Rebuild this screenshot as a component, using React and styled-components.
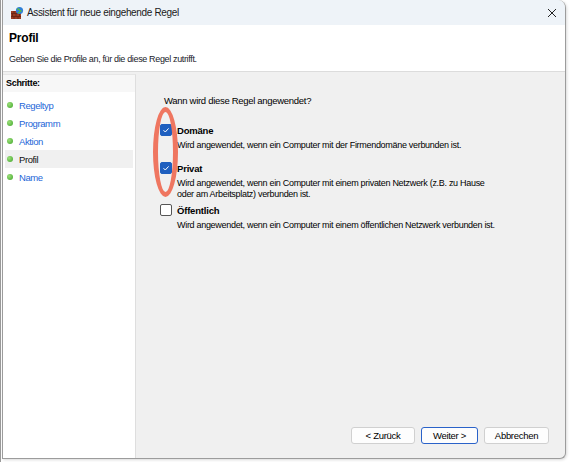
// IMPORTS
import React from 'react';
import styled, { createGlobalStyle } from 'styled-components';

// DATA
const steps = [
    { label: 'Regeltyp' },
    { label: 'Programm' },
    { label: 'Aktion' },
    { label: 'Profil', current: true },
    { label: 'Name' },
];

const profiles = [
    {
        name: 'Domäne',
        checked: true,
        after: 11,
        text: ['Wird angewendet, wenn ein Computer mit der Firmendomäne verbunden ist.'],
    },
    {
        name: 'Privat',
        checked: true,
        after: 4,
        text: [
            'Wird angewendet, wenn ein Computer mit einem privaten Netzwerk (z.B. zu Hause',
            'oder am Arbeitsplatz) verbunden ist.',
        ],
    },
    {
        name: 'Öffentlich',
        checked: false,
        after: 0,
        text: ['Wird angewendet, wenn ein Computer mit einem öffentlichen Netzwerk verbunden ist.'],
    },
];

const buttons = [
    { label: '< Zurück', width: 64 },
    { label: 'Weiter >', width: 57, primary: true },
    { label: 'Abbrechen', width: 65 },
];

// ICONS
const FirewallIcon = () => (
    <svg width="14" height="14" viewBox="0 0 14 14">
        <rect x="1" y="5" width="10" height="8" fill="#9a3a22" />
        <path d="M1 7.5h10M1 10.5h10M4 5v2.5M8 5v2.5M2.5 7.5v3M6 7.5v3M9.5 7.5v3M4 10.5V13M8 10.5V13" stroke="#5e2010" strokeWidth="0.7" />
        <circle cx="9.5" cy="4.5" r="3.6" fill="#2f7fd8" />
        <path d="M7.2 3.2c1-.6 1.8 0 2.2.8.4.8 1.5.6 1.8 1.6M8.3 7.2c.3-1 1-1.3 1.8-1" stroke="#5cbf3a" strokeWidth="1.3" fill="none" />
    </svg>
);

const CloseIcon = () => (
    <svg width="10" height="10" viewBox="0 0 10 10">
        <path d="M1 1l8 8M9 1L1 9" stroke="#222" strokeWidth="1" />
    </svg>
);

const CheckMark = () => (
    <svg width="8" height="8" viewBox="0 0 8 8">
        <path d="M1.5 4.2l1.8 1.8 3.3-3.6" stroke="#fff" strokeWidth="1" fill="none" />
    </svg>
);

// COMPONENT
const App = () => {
    return (
        <>
            <GlobalStyle />
            <Desktop>
                <Window>
                    <TitleBar>
                        <TitleLeft>
                            <FirewallIcon />
                            <span>Assistent für neue eingehende Regel</span>
                        </TitleLeft>
                        <CloseButton><CloseIcon /></CloseButton>
                    </TitleBar>

                    <Header>
                        <h1>Profil</h1>
                        <p>Geben Sie die Profile an, für die diese Regel zutrifft.</p>
                    </Header>

                    <Body>
                        <Sidebar>
                            <SidebarTitle>Schritte:</SidebarTitle>
                            {steps.map((s) => (
                                <Step key={s.label} $current={s.current}>
                                    <Dot />
                                    <span>{s.label}</span>
                                </Step>
                            ))}
                        </Sidebar>

                        <Content>
                            <Question>Wann wird diese Regel angewendet?</Question>
                            <Options>
                                <Marker />
                                {profiles.map((p) => (
                                    <Option key={p.name} $after={p.after}>
                                        <OptionHead>
                                            <Box $checked={p.checked}>{p.checked && <CheckMark />}</Box>
                                            <strong>{p.name}</strong>
                                        </OptionHead>
                                        <OptionText>
                                            {p.text.map((t) => <div key={t}>{t}</div>)}
                                        </OptionText>
                                    </Option>
                                ))}
                            </Options>

                            <Buttons>
                                {buttons.map((b) => (
                                    <Button key={b.label} $width={b.width} $primary={b.primary}>
                                        {b.label}
                                    </Button>
                                ))}
                            </Buttons>
                        </Content>
                    </Body>
                </Window>
            </Desktop>
        </>
    );
};

// STYLED COMPONENTS
const GlobalStyle = createGlobalStyle`
    html, body {
        margin: 0;
        padding: 0;
        background: #fff;
    }
    body {
        font-family: "Liberation Sans", Arial, sans-serif;
        font-size: 9px;
        color: #000;
    }
`

const Desktop = styled.div`
    width: 573px;
    height: 462px;
    overflow: hidden;
    padding-left: 2px;
    box-sizing: border-box;
    background: linear-gradient(to right, #9a9a9a 0, #9a9a9a 1px, #fff 1px);
`

const Window = styled.div`
    width: 564px;
    height: 459px;
    box-sizing: border-box;
    border: 1px solid #9c9c9c;
    border-top: none;
    border-radius: 0 8px 6px 0;
    overflow: hidden;
    display: flex;
    flex-direction: column;
    background: #f0f0f0;
    box-shadow: 1px 1px 3px rgba(0, 0, 0, 0.15);
`

const TitleBar = styled.div`
    height: 25px;
    flex-shrink: 0;
    display: flex;
    align-items: center;
    justify-content: space-between;
    padding: 0 8px 0 7px;
    background: #eef3f8;
    font-size: 10px;
    letter-spacing: -0.35px;
    color: #1a1a1a;
`

const TitleLeft = styled.div`
    display: flex;
    align-items: center;
    gap: 3px;
`

const CloseButton = styled.div`
    display: flex;
    align-items: center;
    padding-top: 1px;
`

const Header = styled.div`
    height: 47px;
    flex-shrink: 0;
    background: #fff;
    border-bottom: 1px solid #dcdcdc;
    padding: 6px 6px 0;
    box-sizing: border-box;

    h1 {
        margin: 0;
        font-size: 12px;
        font-weight: bold;
        line-height: 14px;
        letter-spacing: -0.2px;
    }

    p {
        margin: 9px 0 0;
        font-size: 9px;
        line-height: 11px;
        letter-spacing: -0.35px;
        color: #1a1a2a;
    }
`

const Body = styled.div`
    flex: 1;
    display: flex;
    padding-top: 2px;
`

const Sidebar = styled.div`
    width: 128px;
    flex-shrink: 0;
    background: #fff;
    border-top: 1px solid #e6e6e6;
    border-right: 1px solid #dedede;
    padding: 0 2px;
`

const SidebarTitle = styled.div`
    height: 17px;
    line-height: 17px;
    padding-left: 3px;
    margin: 0 -2px 4px;
    background: #f7f7f7;
    font-size: 9px;
    font-weight: bold;
    letter-spacing: -0.3px;
`

const Step = styled.div`
    height: 18px;
    display: flex;
    align-items: center;
    gap: 6px;
    padding-left: 2px;
    font-size: 9.5px;
    letter-spacing: -0.4px;
    color: ${(p) => (p.$current ? '#111' : '#2466d8')};
    background: ${(p) => (p.$current ? '#f0f0f0' : 'transparent')};
`

const Dot = styled.div`
    width: 6px;
    height: 6px;
    border-radius: 50%;
    background: radial-gradient(circle at 35% 35%, #9de07a, #3fa52a);
`

const Content = styled.div`
    flex: 1;
    display: flex;
    flex-direction: column;
    padding: 21px 16px 14px 24px;
`

const Question = styled.div`
    font-size: 9.5px;
    line-height: 12px;
    letter-spacing: -0.3px;
    margin: 0 0 17px 4px;
`

const Options = styled.div`
    position: relative;
    display: flex;
    flex-direction: column;
    flex: 1;
`

const Marker = styled.div`
    position: absolute;
    left: -7px;
    top: -17px;
    width: 15px;
    height: 80px;
    border: 5px solid #ef7660;
    border-radius: 50%;
    pointer-events: none;
`

const Option = styled.div`
    display: flex;
    flex-direction: column;
    margin-bottom: ${(p) => p.$after}px;
`

const OptionHead = styled.div`
    display: flex;
    align-items: center;
    gap: 5px;
    height: 12px;

    strong {
        font-size: 9.5px;
        font-weight: bold;
        letter-spacing: -0.2px;
    }
`

const Box = styled.div`
    width: 12px;
    height: 12px;
    box-sizing: border-box;
    border-radius: 2px;
    display: flex;
    align-items: center;
    justify-content: center;
    background: ${(p) => (p.$checked ? '#1f5fbf' : '#fff')};
    border: 1px solid ${(p) => (p.$checked ? '#1f5fbf' : '#555')};
`

const OptionText = styled.div`
    padding-left: 17px;
    margin-top: 4px;
    font-size: 9px;
    line-height: 11px;
    letter-spacing: -0.3px;
`

const Buttons = styled.div`
    display: flex;
    justify-content: flex-end;
    gap: 6px;
`

const Button = styled.div`
    width: ${(p) => p.$width}px;
    height: 17px;
    box-sizing: border-box;
    display: flex;
    align-items: center;
    justify-content: center;
    background: #fdfdfd;
    border: 1px solid ${(p) => (p.$primary ? '#2a62c9' : '#d0d0d0')};
    border-radius: 3px;
    font-size: 9.5px;
    letter-spacing: -0.3px;
`

// EXPORT
export default App;
